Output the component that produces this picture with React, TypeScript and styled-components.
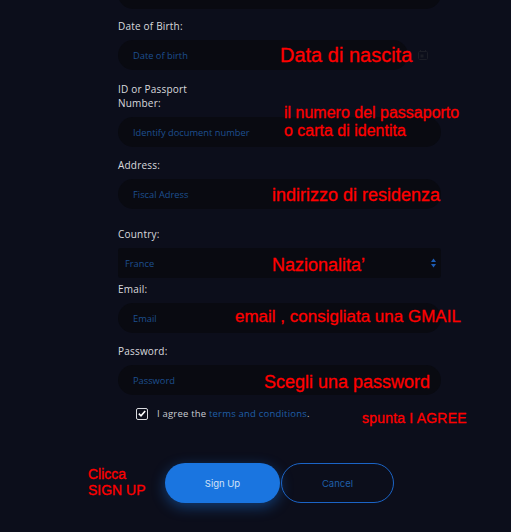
import styled, { createGlobalStyle } from "styled-components";

const GlobalStyle = createGlobalStyle`
  html, body {
    margin: 0;
    padding: 0;
    background: #0c0e1b;
    overflow: hidden;
  }
  body {
    font-family: "Open Sans", "Liberation Sans", sans-serif;
  }
`;

const Page = styled.div`
  width: 511px;
  height: 532px;
  background: #0c0e1b;
  overflow: hidden;
  position: relative;
`;

const Form = styled.div`
  display: flex;
  flex-direction: column;
  width: 323px;
  margin: -21px 0 0 118px;
`;

const Field = styled.div<{ $top: number }>`
  position: relative;
  display: flex;
  flex-direction: column;
  margin-top: ${(p) => p.$top}px;
`;

const Label = styled.label<{ $narrow?: boolean }>`
  font-size: 10px;
  line-height: 14px;
  color: #d9dade;
  letter-spacing: 0.2px;
  margin-bottom: 7px;
  width: ${(p) => (p.$narrow ? "80px" : "auto")};
`;

const InputRow = styled.div`
  display: flex;
  align-items: center;
  gap: 10px;
`;

const Input = styled.div<{ $width?: number }>`
  box-sizing: border-box;
  height: 30px;
  width: ${(p) => (p.$width ? `${p.$width}px` : "100%")};
  border-radius: 15px;
  background: #090a11;
  padding-left: 15px;
  display: flex;
  align-items: center;
  font-size: 9.3px;
  color: #1d4f8f;
`;

const Select = styled.div`
  box-sizing: border-box;
  height: 30px;
  width: 100%;
  border-radius: 3px;
  background: #090a11;
  padding: 0 5px 0 7px;
  display: flex;
  align-items: center;
  justify-content: space-between;
  font-size: 9.3px;
  color: #1d4f8f;
`;

const Note = styled.div<{ $x: number; $y: number; $size: number }>`
  position: absolute;
  left: ${(p) => p.$x}px;
  top: ${(p) => p.$y}px;
  font-family: "Liberation Sans", Arial, sans-serif;
  font-size: ${(p) => p.$size}px;
  line-height: ${(p) => Math.round(p.$size * 1.12)}px;
  color: #ff0000;
  -webkit-text-stroke: 0.3px #ff0000;
  white-space: nowrap;
  pointer-events: none;
`;

const AgreeRow = styled.div`
  position: relative;
  display: flex;
  align-items: center;
  gap: 9px;
  margin: 12px 0 0 18px;
  font-size: 9.5px;
  color: #c9cbd2;
  letter-spacing: 0.2px;
`;

const Box = styled.span`
  box-sizing: border-box;
  width: 12px;
  height: 12px;
  border: 1px solid #d9dade;
  border-radius: 2px;
  display: flex;
  align-items: center;
  justify-content: center;
`;

const Link = styled.span`
  color: #1f5ea8;
`;

const Buttons = styled.div`
  position: relative;
  display: flex;
  margin: 43px 0 0 165px;
  gap: 1px;
`;

const Button = styled.div<{ $primary?: boolean }>`
  box-sizing: border-box;
  width: ${(p) => (p.$primary ? 115 : 113)}px;
  height: 40px;
  border-radius: 20px;
  display: flex;
  align-items: center;
  justify-content: center;
  font-family: "Inter", "Open Sans", sans-serif;
  font-size: 9.5px;
  background: ${(p) => (p.$primary ? "#1a75e0" : "transparent")};
  color: ${(p) => (p.$primary ? "#d4e3f7" : "#1f5ea8")};
  border: ${(p) => (p.$primary ? "none" : "1px solid #1b64c6")};
  box-shadow: ${(p) =>
    p.$primary ? "0 4px 14px rgba(26, 117, 224, 0.45)" : "none"};
`;

function Calendar() {
  return (
    <svg width="10" height="10" viewBox="0 0 10 10" fill="none">
      <rect x="0.5" y="1.5" width="9" height="8" rx="1" stroke="#1b1d26" />
      <rect x="2.5" y="4.5" width="3" height="3" fill="#1b1d26" />
      <line x1="2.5" y1="0" x2="2.5" y2="2" stroke="#1b1d26" />
      <line x1="7.5" y1="0" x2="7.5" y2="2" stroke="#1b1d26" />
    </svg>
  );
}

function Arrows() {
  return (
    <svg width="5" height="10" viewBox="0 0 5 10">
      <path d="M2.5 0.5 L5 4 L0 4 Z" fill="#1d5cb4" />
      <path d="M2.5 9.5 L5 6 L0 6 Z" fill="#1d5cb4" />
    </svg>
  );
}

function Check() {
  return (
    <svg width="8" height="7" viewBox="0 0 8 7">
      <path d="M0.8 3.6 L3 5.8 L7.2 1" stroke="#ffffff" strokeWidth="1.6" fill="none" />
    </svg>
  );
}

export default function App() {
  return (
    <Page>
      <GlobalStyle />
      <Form>
        <Field $top={0}>
          <Input />
        </Field>

        <Field $top={10}>
          <Label>Date of Birth:</Label>
          <InputRow>
            <Input $width={290}>Date of birth</Input>
            <Calendar />
          </InputRow>
          <Note $x={162} $y={25} $size={20}>Data di nascita</Note>
        </Field>

        <Field $top={12}>
          <Label $narrow>ID or Passport Number:</Label>
          <Input>Identify document number</Input>
          <Note $x={166} $y={22} $size={16}>
            il numero del passaporto
            <br />o carta di identita
          </Note>
        </Field>

        <Field $top={11}>
          <Label>Address:</Label>
          <Input>Fiscal Adress</Input>
          <Note $x={154} $y={27} $size={18}>indirizzo di residenza</Note>
        </Field>

        <Field $top={18}>
          <Label>Country:</Label>
          <Select>
            France
            <Arrows />
          </Select>
          <Note $x={154} $y={28} $size={18}>Nazionalita’</Note>
        </Field>

        <Field $top={4}>
          <Label>Email:</Label>
          <Input>Email</Input>
          <Note $x={117} $y={25} $size={17}>email , consigliata una GMAIL</Note>
        </Field>

        <Field $top={11}>
          <Label>Password:</Label>
          <Input>Password</Input>
          <Note $x={146} $y={28} $size={18}>Scegli una password</Note>
        </Field>

        <AgreeRow>
          <Box>
            <Check />
          </Box>
          <span>
            I agree the <Link>terms and conditions</Link>.
          </span>
          <Note $x={226} $y={3} $size={14}>spunta I AGREE</Note>
        </AgreeRow>
      </Form>

      <Buttons>
        <Note $x={-77} $y={3} $size={14}>
          Clicca
          <br />
          SIGN UP
        </Note>
        <Button $primary>Sign Up</Button>
        <Button>Cancel</Button>
      </Buttons>
    </Page>
  );
}
